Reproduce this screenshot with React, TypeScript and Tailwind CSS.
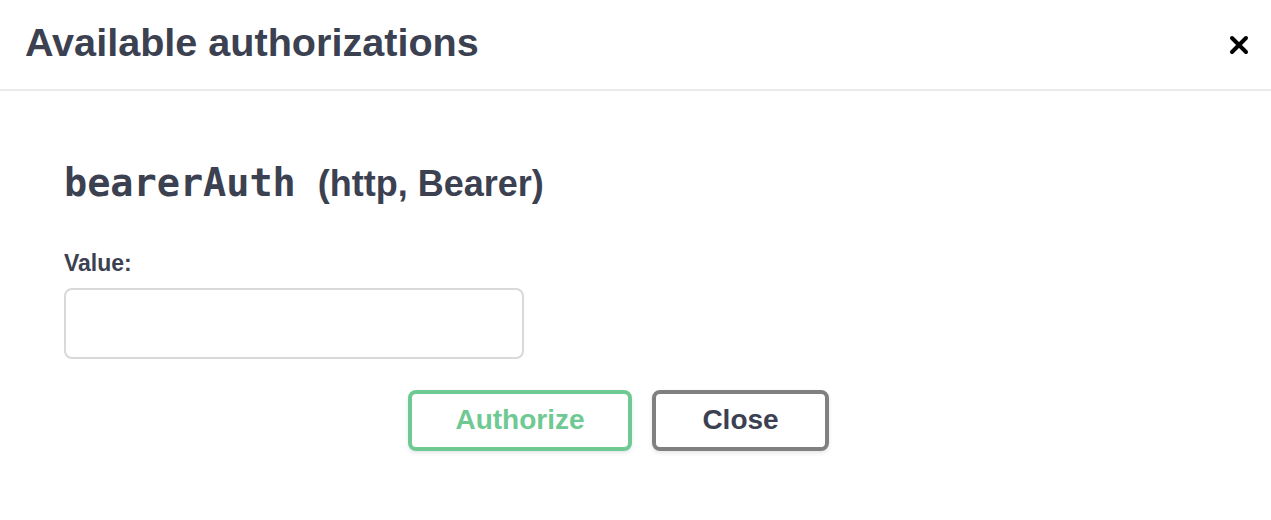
export default function App() {
  return (
    <div className="min-h-[520px] w-full bg-white text-[#3b4151] [font-family:'Liberation_Sans',Arial,sans-serif]">
      <div className="flex h-[91px] items-center justify-between border-b-2 border-[#ebebeb] pb-[4px] pl-[25px] pr-[22px]">
        <h3 className="text-[39.6px] font-bold leading-none">Available authorizations</h3>
        <button type="button" aria-label="Close" className="mt-[4px] flex h-[20px] w-[20px] items-center justify-center">
          <svg width="20" height="20" viewBox="0 0 20 20">
            <path d="M3 3L17 17M17 3L3 17" stroke="#000" strokeWidth="4" strokeLinecap="round" />
          </svg>
        </button>
      </div>

      <div className="pl-[64px] pr-[98px] pt-[73px]">
        <h4 className="flex items-baseline gap-[22px]">
          <code className="text-[38.5px] font-bold leading-none [font-family:'DejaVu_Sans_Mono',monospace]">bearerAuth</code>
          <span className="text-[36px] font-bold leading-none">(http, Bearer)</span>
        </h4>

        <label className="mt-[49px] block text-[23px] font-bold leading-none">Value:</label>
        <input
          type="text"
          className="mt-[13px] block h-[71px] w-[460px] rounded-[8px] border-2 border-[#d9d9d9] bg-white px-4 text-[24px] outline-none"
        />

        <div className="mt-[31px] flex justify-center gap-[20px]">
          <button
            type="button"
            className="h-[61px] w-[224px] rounded-[8px] border-4 border-[#6fc993] bg-white text-[28px] font-bold text-[#6fc993] shadow-[0_2px_4px_rgba(0,0,0,0.1)]"
          >
            Authorize
          </button>
          <button
            type="button"
            className="h-[61px] w-[177px] rounded-[8px] border-4 border-[#808080] bg-white text-[28px] font-bold text-[#3b4151] shadow-[0_2px_4px_rgba(0,0,0,0.1)]"
          >
            Close
          </button>
        </div>
      </div>
    </div>
  );
}
